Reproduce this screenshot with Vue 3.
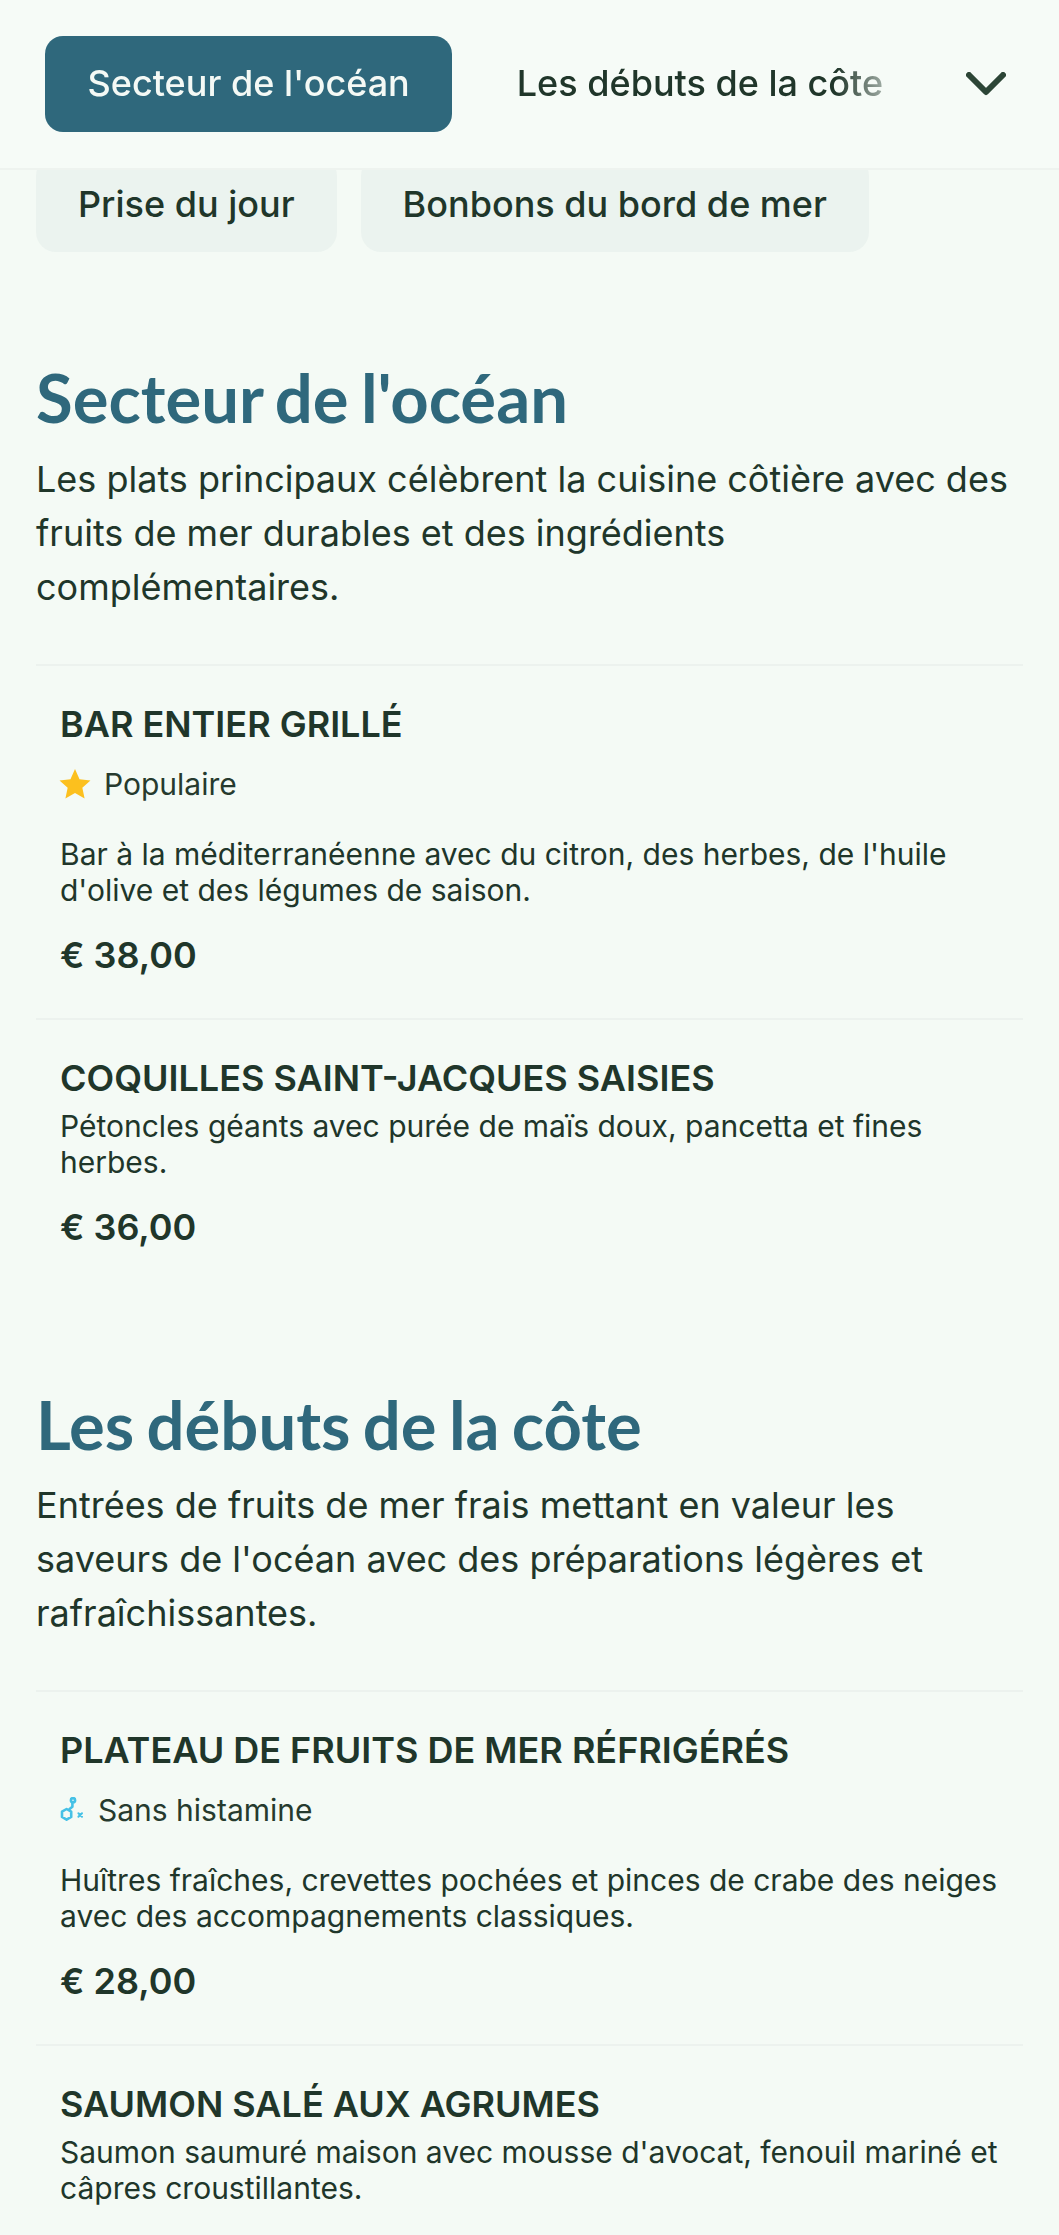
<template>
  <div class="page">
    <!-- barre de navigation fixe -->
    <header class="top-bar">
      <div class="tabs">
        <button class="tab active">Secteur de l'océan</button>
        <button class="tab">Les débuts de la côte</button>
      </div>
      <button class="toggle" aria-label="Ouvrir">
        <svg viewBox="0 0 40 24" width="40" height="24" fill="none" stroke="currentColor" stroke-width="6" stroke-linecap="round" stroke-linejoin="round">
          <path d="M3 3l17 17L37 3" />
        </svg>
      </button>
    </header>

    <div class="chips">
      <span v-for="chip in chips" :key="chip" class="chip">{{ chip }}</span>
    </div>

    <section v-for="section in sections" :key="section.title" class="section">
      <h2 class="section-title">{{ section.title }}</h2>
      <p class="section-desc">{{ section.desc }}</p>
      <article v-for="item in section.items" :key="item.name" class="item">
        <h3 class="item-name">{{ item.name }}</h3>
        <div v-if="item.badge === 'star'" class="badge">
          <svg class="star" viewBox="0 0 24 24" width="32" height="32">
            <path fill="#fcc01e" d="M12 .8l3.4 7.6 8.2.9-6.1 5.5 1.7 8.1L12 18.8l-7.2 4.1 1.7-8.1L.4 9.3l8.2-.9z" />
          </svg>
          <span>Populaire</span>
        </div>
        <div v-if="item.badge === 'histamine'" class="badge histamine">
          <svg viewBox="0 0 24 26" width="24" height="26" fill="none" stroke="#45c1e6" stroke-width="2.6" stroke-linecap="round" stroke-linejoin="round">
            <circle cx="13" cy="3.2" r="2.1" />
            <path d="M12.4 5.4v4.4L9.6 12" />
            <path d="M6.6 12l4.6 2.7v5.2l-4.6 2.7L2 19.9v-5.2z" />
            <path d="M18.4 16.2l3.6 3.6M22 16.2l-3.6 3.6" stroke-width="2" />
          </svg>
          <span>Sans histamine</span>
        </div>
        <p class="item-desc">{{ item.desc }}</p>
        <div v-if="item.price" class="item-price">{{ item.price }}</div>
      </article>
    </section>
  </div>
</template>

<script setup>
const chips = ['Prise du jour', 'Bonbons du bord de mer']

const sections = [
  {
    title: "Secteur de l'océan",
    desc: 'Les plats principaux célèbrent la cuisine côtière avec des fruits de mer durables et des ingrédients complémentaires.',
    items: [
      {
        name: 'BAR ENTIER GRILLÉ',
        badge: 'star',
        desc: "Bar à la méditerranéenne avec du citron, des herbes, de l'huile d'olive et des légumes de saison.",
        price: '€ 38,00'
      },
      {
        name: 'COQUILLES SAINT-JACQUES SAISIES',
        desc: 'Pétoncles géants avec purée de maïs doux, pancetta et fines herbes.',
        price: '€ 36,00'
      }
    ]
  },
  {
    title: 'Les débuts de la côte',
    desc: "Entrées de fruits de mer frais mettant en valeur les saveurs de l'océan avec des préparations légères et rafraîchissantes.",
    items: [
      {
        name: 'PLATEAU DE FRUITS DE MER RÉFRIGÉRÉS',
        badge: 'histamine',
        desc: 'Huîtres fraîches, crevettes pochées et pinces de crabe des neiges avec des accompagnements classiques.',
        price: '€ 28,00'
      },
      {
        name: 'SAUMON SALÉ AUX AGRUMES',
        desc: "Saumon saumuré maison avec mousse d'avocat, fenouil mariné et câpres croustillantes."
      }
    ]
  }
]
</script>

<style>
html,
body {
  margin: 0;
  background: #f4faf5;
}
</style>

<style scoped>
.page {
  position: relative;
  height: 2235px;
  overflow: hidden;
  padding: 156px 36px 0;
  box-sizing: border-box;
  background: #f4faf5;
  color: #20362a;
  font-family: Inter, "Liberation Sans", sans-serif;
}

.top-bar {
  position: absolute;
  top: 0;
  left: 0;
  right: 0;
  z-index: 2;
  height: 168px;
  display: flex;
  align-items: center;
  padding-left: 45px;
  padding-right: 53px;
  background: #f6fbf7;
  border-bottom: 2px solid #eef3ef;
}

.tabs {
  flex: 1;
  display: flex;
  gap: 22px;
  align-items: center;
  overflow: hidden;
  -webkit-mask-image: linear-gradient(to right, #000 calc(100% - 80px), transparent 100%);
  mask-image: linear-gradient(to right, #000 calc(100% - 80px), transparent 100%);
}

.tab {
  flex: none;
  height: 96px;
  padding: 0 42.5px 2px;
  border: none;
  border-radius: 18px;
  background: transparent;
  color: #20362a;
  font-family: inherit;
  font-size: 36px;
  font-weight: 500;
}

.tab.active {
  background: #2f687c;
  color: #f4f9f5;
}

.toggle {
  flex: none;
  margin-left: 50px;
  padding: 0;
  border: none;
  background: none;
  color: #2c4536;
  display: flex;
}

.chips {
  display: flex;
  gap: 24px;
}

.chip {
  height: 96px;
  box-sizing: border-box;
  display: flex;
  align-items: center;
  padding: 0 42px 1px;
  border-radius: 20px;
  background: #ebf3ef;
  font-size: 36px;
  font-weight: 500;
}

.section {
  margin-top: 105px;
}

.section + .section {
  margin-top: 94px;
}

.section-title {
  margin: 0 0 14.5px;
  color: #2f687c;
  font-family: Lato, sans-serif;
  font-size: 67px;
  font-weight: 700;
  line-height: 80px;
  word-spacing: -4px;
}

.section-desc {
  margin: 0 0 50px;
  font-size: 36px;
  line-height: 54px;
}

.item {
  padding: 36px 24px 41px;
  border-top: 2px solid #ecf2ee;
}

.item-name {
  margin: 0;
  font-size: 36px;
  font-weight: 600;
  line-height: 44px;
}

.badge {
  display: flex;
  align-items: center;
  gap: 15px;
  margin-top: 18px;
  font-size: 30px;
  line-height: 40px;
  color: #263a2e;
}

.star {
  margin-left: -1px;
  margin-right: -2px;
}

.histamine {
  gap: 14px;
}

.item-desc {
  margin: 8px 0 0;
  font-size: 30px;
  line-height: 36px;
}

.badge + .item-desc {
  margin-top: 32px;
}

.item-price {
  margin-top: 25px;
  font-size: 36px;
  font-weight: 600;
  line-height: 44px;
}
</style>
